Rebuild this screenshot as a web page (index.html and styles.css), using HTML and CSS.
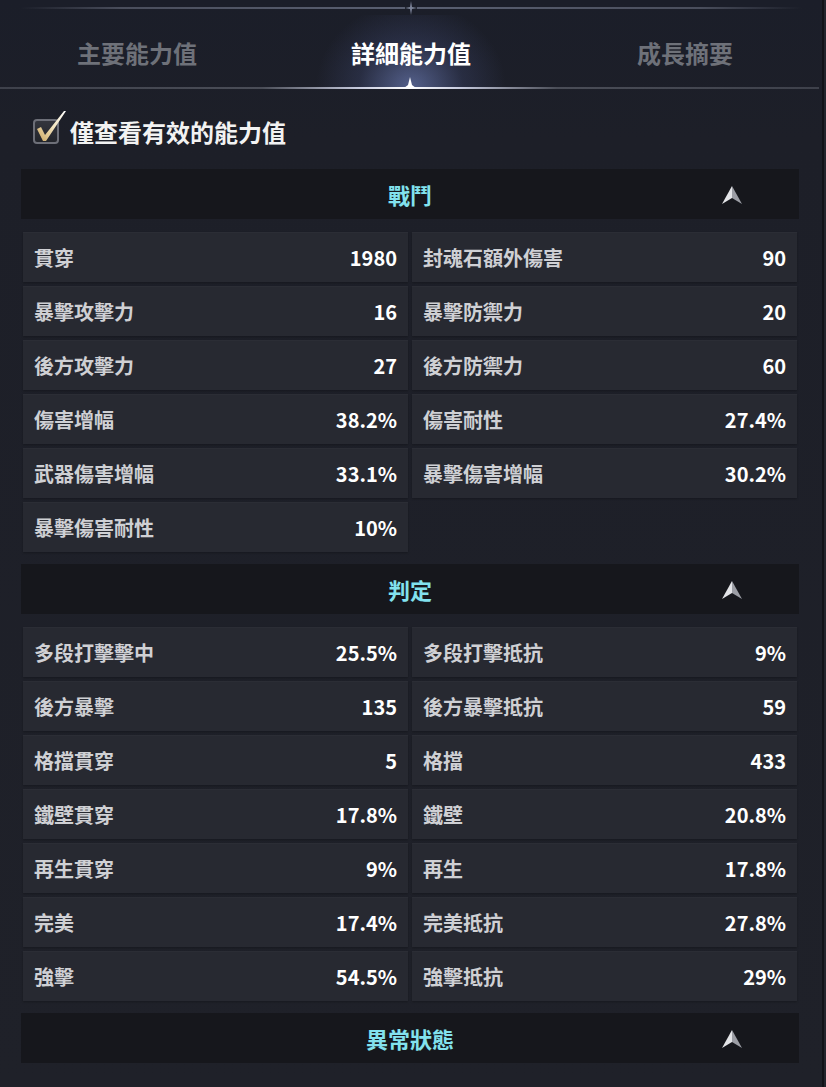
FILE: index.html
```html
<!DOCTYPE html>
<html lang="zh-Hant">
<head>
    <meta charset="UTF-8">
    <meta name="viewport" content="width=device-width, initial-scale=1.0">
    <title>詳細能力值</title>
    <link rel="stylesheet" href="styles.css">
</head>
<body>
<div class="panel">

    <div class="top-line">
        <span class="line-part left"></span>
        <svg class="sparkle" width="12" height="14" viewBox="0 0 12 14"><path d="M6 0 L7 6 L12 7 L7 8 L6 14 L5 8 L0 7 L5 6 Z" fill="#7c8398"/></svg>
        <span class="line-part right"></span>
    </div>

    <div class="tabs">
        <div class="tab">主要能力值</div>
        <div class="tab active">詳細能力值</div>
        <div class="tab">成長摘要</div>
    </div>
    <div class="tab-line">
        <svg class="tab-marker" width="12" height="11" viewBox="0 0 12 11"><path d="M6 0 L8 8 L12 11 L0 11 L4 8 Z" fill="#ffffff"/></svg>
    </div>

    <label class="filter">
        <svg class="check" width="34" height="34" viewBox="0 0 34 34">
            <defs>
                <linearGradient id="box" x1="0" y1="0" x2="0" y2="1">
                    <stop offset="0" stop-color="#34363e"/>
                    <stop offset="1" stop-color="#22242a"/>
                </linearGradient>
                <linearGradient id="tick" x1="0" y1="1" x2="1" y2="0">
                    <stop offset="0" stop-color="#c9a45e"/>
                    <stop offset="0.5" stop-color="#f3e4bd"/>
                    <stop offset="1" stop-color="#ffffff"/>
                </linearGradient>
            </defs>
            <rect x="1" y="10" width="24" height="23" rx="3" fill="url(#box)" stroke="#6d6f78" stroke-width="2"/>
            <path d="M4 19 L8 17 L12 25 L31 1 L33 1 L13 31 L10 31 Z" fill="url(#tick)"/>
        </svg>
        <span>僅查看有效的能力值</span>
    </label>

    <div class="content">

        <div class="section-head">
            <span class="section-title">戰鬥</span>
            <svg class="fold" width="20" height="18" viewBox="0 0 20 18"><path d="M10 0 L0 18 L10 12 Z" fill="#e4e5e8"/><path d="M10 0 L20 18 L10 12 Z" fill="#9c9ea5"/></svg>
        </div>
        <div class="stats">
            <div class="stat"><span class="label">貫穿</span><span class="value">1980</span></div>
            <div class="stat"><span class="label">封魂石額外傷害</span><span class="value">90</span></div>
            <div class="stat"><span class="label">暴擊攻擊力</span><span class="value">16</span></div>
            <div class="stat"><span class="label">暴擊防禦力</span><span class="value">20</span></div>
            <div class="stat"><span class="label">後方攻擊力</span><span class="value">27</span></div>
            <div class="stat"><span class="label">後方防禦力</span><span class="value">60</span></div>
            <div class="stat"><span class="label">傷害增幅</span><span class="value">38.2%</span></div>
            <div class="stat"><span class="label">傷害耐性</span><span class="value">27.4%</span></div>
            <div class="stat"><span class="label">武器傷害增幅</span><span class="value">33.1%</span></div>
            <div class="stat"><span class="label">暴擊傷害增幅</span><span class="value">30.2%</span></div>
            <div class="stat"><span class="label">暴擊傷害耐性</span><span class="value">10%</span></div>
        </div>

        <div class="section-head">
            <span class="section-title">判定</span>
            <svg class="fold" width="20" height="18" viewBox="0 0 20 18"><path d="M10 0 L0 18 L10 12 Z" fill="#e4e5e8"/><path d="M10 0 L20 18 L10 12 Z" fill="#9c9ea5"/></svg>
        </div>
        <div class="stats">
            <div class="stat"><span class="label">多段打擊擊中</span><span class="value">25.5%</span></div>
            <div class="stat"><span class="label">多段打擊抵抗</span><span class="value">9%</span></div>
            <div class="stat"><span class="label">後方暴擊</span><span class="value">135</span></div>
            <div class="stat"><span class="label">後方暴擊抵抗</span><span class="value">59</span></div>
            <div class="stat"><span class="label">格擋貫穿</span><span class="value">5</span></div>
            <div class="stat"><span class="label">格擋</span><span class="value">433</span></div>
            <div class="stat"><span class="label">鐵壁貫穿</span><span class="value">17.8%</span></div>
            <div class="stat"><span class="label">鐵壁</span><span class="value">20.8%</span></div>
            <div class="stat"><span class="label">再生貫穿</span><span class="value">9%</span></div>
            <div class="stat"><span class="label">再生</span><span class="value">17.8%</span></div>
            <div class="stat"><span class="label">完美</span><span class="value">17.4%</span></div>
            <div class="stat"><span class="label">完美抵抗</span><span class="value">27.8%</span></div>
            <div class="stat"><span class="label">強擊</span><span class="value">54.5%</span></div>
            <div class="stat"><span class="label">強擊抵抗</span><span class="value">29%</span></div>
        </div>

        <div class="section-head">
            <span class="section-title">異常狀態</span>
            <svg class="fold" width="20" height="18" viewBox="0 0 20 18"><path d="M10 0 L0 18 L10 12 Z" fill="#e4e5e8"/><path d="M10 0 L20 18 L10 12 Z" fill="#9c9ea5"/></svg>
        </div>

    </div>
</div>
</body>
</html>
```

FILE: styles.css
```css
body {
    margin: 0;
    background-color: #23252d;
    font-family: "Noto Sans CJK TC", "Noto Sans", sans-serif;
    color: #ffffff;
}
.panel {
    width: 822px;
    height: 1087px;
    overflow: hidden;
    border-right: 2px solid #121318;
    background: linear-gradient(to bottom, #1b1e29 0, #1d1f28 140px, #1f2129 100%);
}

/* tabs */
.top-line {
    display: flex;
    align-items: center;
    height: 14px;
    margin-top: 1px;
}
.line-part {
    flex: 1;
    height: 2px;
}
.line-part.left {
    background: linear-gradient(to right, rgba(80, 85, 100, 0) 5%, #4a4e5c 30%, #5a6072 100%);
}
.line-part.right {
    background: linear-gradient(to left, rgba(80, 85, 100, 0) 5%, #4a4e5c 30%, #5a6072 100%);
}
.sparkle {
    display: block;
}
.tabs {
    display: flex;
    height: 72px;
}
.tab {
    flex: 1;
    display: flex;
    align-items: center;
    justify-content: center;
    padding-top: 2px;
    font-size: 24px;
    font-weight: bold;
    color: #6e7179;
}
.tab.active {
    color: #ffffff;
    background: radial-gradient(ellipse 95px 85px at 50% 100%, rgba(130, 150, 220, 0.55), rgba(90, 105, 170, 0.2) 55%, rgba(40, 45, 70, 0) 100%);
}
.tab-line {
    position: relative;
    height: 2px;
    width: 819px;
    background: linear-gradient(to right, #3e414b 0, #4a4d57 32%, #c9cde0 44%, #ffffff 50%, #c9cde0 56%, #4a4d57 68%, #3e414b 100%);
}
.tab-marker {
    position: absolute;
    left: 404px;
    bottom: 1px;
}

/* filter */
.filter {
    display: flex;
    align-items: center;
    gap: 3px;
    margin: 25px 0 0 33px;
    height: 34px;
    font-size: 24px;
    font-weight: bold;
    color: #f2f2f2;
}
.check {
    display: block;
    margin-top: -8px;
}

/* sections */
.content {
    width: 778px;
    margin: 21px 0 0 21px;
}
.section-head {
    position: relative;
    display: flex;
    align-items: center;
    justify-content: center;
    height: 50px;
    background-color: #16171c;
}
.section-title {
    font-size: 22px;
    font-weight: bold;
    color: #82e2ee;
}
.fold {
    position: absolute;
    right: 57px;
    top: 17px;
}
.stats {
    display: grid;
    grid-template-columns: 1fr 1fr;
    gap: 4px;
    margin: 13px 2px 12px;
}
.stat {
    display: flex;
    align-items: center;
    justify-content: space-between;
    height: 50px;
    padding: 0 11px;
    background-color: #272931;
    box-shadow: inset 0 1px 0 rgba(255, 255, 255, 0.02), 0 1px 2px rgba(0, 0, 0, 0.25);
}
.label {
    font-size: 20px;
    font-weight: bold;
    color: #cfd0d4;
}
.value {
    font-size: 20px;
    font-weight: bold;
    color: #ffffff;
}
```
